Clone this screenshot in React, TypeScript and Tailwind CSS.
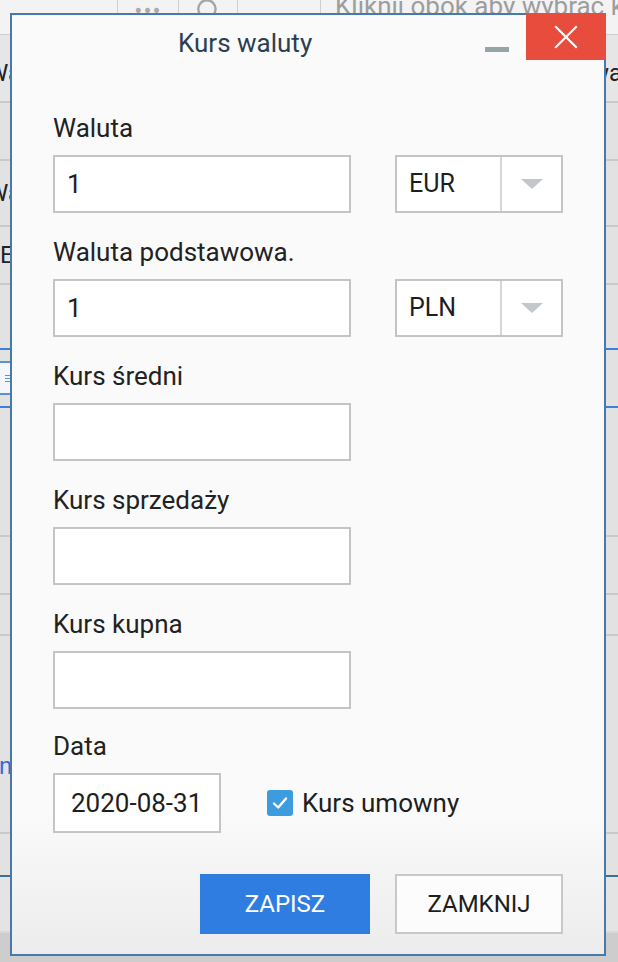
import { Search } from "lucide-react";

interface Field {
  label: string;
  value: string;
  currency?: string;
}

const fields: Field[] = [
  { label: "Waluta", value: "1", currency: "EUR" },
  { label: "Waluta podstawowa.", value: "1", currency: "PLN" },
  { label: "Kurs średni", value: "" },
  { label: "Kurs sprzedaży", value: "" },
  { label: "Kurs kupna", value: "" },
];

function CurrencySelect({ code }: { code: string }) {
  return (
    <div className="flex w-[168px] h-[58px] border-2 border-[#c4c4c4] bg-white">
      <div className="flex items-center w-[103px] pl-[12px] text-[25px] text-[#1e1e1e]">{code}</div>
      <div className="flex flex-1 items-center justify-center border-l-2 border-[#d6d6d6]">
        <div className="w-0 h-0 border-l-[11px] border-r-[11px] border-t-[10px] border-l-transparent border-r-transparent border-t-[#c3c7cb]" />
      </div>
    </div>
  );
}

function Background() {
  return (
    <div className="flex flex-col w-full h-full text-[24px] text-[#222]">
      {/* toolbar behind the dialog */}
      <div className="flex h-[35px] bg-[#f3f3f3] border-b border-[#cdcdcd] text-[#9d9d9d]">
        <div className="shrink-0 w-[118px] border-r border-[#cfcfcf]" />
        <div className="shrink-0 flex justify-center w-[61px] border-r border-[#cfcfcf] leading-[22px] tracking-[1px] text-[#aaa]">•••</div>
        <div className="shrink-0 flex justify-center w-[59px] border-r border-[#cfcfcf] -mt-[3px]">
          <Search size={26} strokeWidth={2.2} className="text-[#a6a6a6]" />
        </div>
        <div className="shrink-0 w-[83px] border-r border-[#cfcfcf]" />
        <div className="shrink-0 pl-[14px] -mt-[10px] text-[26px] leading-[32px] whitespace-nowrap">Kliknij obok aby wybrać kurs</div>
      </div>
      <div className="flex items-center justify-between h-[68px] border-b-2 border-[#c9c9c9] bg-[#e6e6e6] pt-[10px]">
        <span className="-ml-[13px]">Waluta</span>
        <span className="-mr-[4px]">Nazwa</span>
      </div>
      <div className="h-[58px] border-b-2 border-[#c9c9c9] bg-[#e2e2e2]" />
      <div className="flex items-center h-[66px] border-b-2 border-[#c9c9c9] bg-[#e2e2e2]">
        <span className="-ml-[13px]">Waluta</span>
      </div>
      <div className="flex items-center h-[58px] border-b-2 border-[#c9c9c9] bg-[#e2e2e2]">
        <span>EUR</span>
      </div>
      <div className="h-[65px] border-b-2 border-[#3f7fd8] bg-[#e2e2e2]" />
      <div className="flex items-center h-[58px] border-b-2 border-[#3f7fd8] bg-[#e2e2e2]">
        <div className="flex flex-col justify-center gap-[2px] w-[14px] h-[34px] -ml-[2px] pl-[5px] border-2 border-[#5b8fe0] bg-[#f3f6fb]">
          <div className="w-[6px] h-[1px] bg-[#5b8fe0]" />
          <div className="w-[6px] h-[1px] bg-[#5b8fe0]" />
          <div className="w-[6px] h-[1px] bg-[#5b8fe0]" />
        </div>
      </div>
      <div className="h-[129px] border-b-2 border-[#c9c9c9] bg-[#e2e2e2]" />
      <div className="h-[58px] border-b-2 border-[#c9c9c9] bg-[#e2e2e2]" />
      <div className="h-[41px] border-b-2 border-[#c9c9c9] bg-[#e2e2e2]" />
      <div className="flex items-end h-[198px] border-b-2 border-[#c9c9c9] bg-[#e2e2e2] pb-[48px]">
        <span className="-ml-[1px] text-[#2f6fd6]">ne</span>
      </div>
      <div className="h-[43px] border-b-2 border-[#3d6f99] bg-[#e2e2e2]" />
      <div className="h-[56px] border-b-2 border-[#d9d9d9] bg-[#e4e4e4]" />
      <div className="flex-1 bg-[#cdcdcd]" />
    </div>
  );
}

export default function App() {
  return (
    <div className="relative w-[618px] h-[962px] overflow-hidden bg-[#e0e0e0] font-[Roboto,'Noto_Sans',sans-serif]">
      <Background />

      {/* dialog */}
      <div className="absolute left-[10px] top-[13px] w-[596px] h-[943px] flex flex-col border-2 border-[#457aa9] bg-linear-to-b from-[#fafafa] from-85% to-[#ececec]">
        <div className="flex items-start h-[43px]">
          <div className="ml-[166px] pt-[14px] text-[26px] leading-[28px] text-[#2c3e50]">Kurs waluty</div>
          <div className="flex-1" />
          <div className="mt-[32px] mr-[17px] w-[24px] h-[5px] bg-[#95a5a6]" />
          <div className="flex items-center justify-center -mt-[2px] -mr-[2px] w-[80px] h-[47px] bg-[#e74c3c]">
            <svg width="24" height="24" viewBox="0 0 24 24" fill="none" stroke="white" strokeWidth="2.2" strokeLinecap="square">
              <path d="M2 2 L22 22 M22 2 L2 22" />
            </svg>
          </div>
        </div>

        <div className="flex flex-col px-[41px] pt-[55px]">
          {fields.map((f, i) => (
            <div key={i} className={i === 0 ? "" : "mt-[24px]"}>
              <div className="text-[26px] leading-[30px] text-[#222] mb-[12px]">{f.label}</div>
              <div className="flex items-center justify-between">
                <input
                  readOnly
                  value={f.value}
                  className="w-[298px] h-[58px] border-2 border-[#c4c4c4] bg-white pl-[12px] text-[26px] text-[#1e1e1e] outline-none"
                />
                {f.currency && <CurrencySelect code={f.currency} />}
              </div>
            </div>
          ))}

          <div className="mt-[22px]">
            <div className="text-[26px] leading-[30px] text-[#222] mb-[12px]">Data</div>
            <div className="flex items-center">
              <input
                readOnly
                value="2020-08-31"
                className="w-[168px] h-[60px] border-2 border-[#c4c4c4] bg-white pl-[16px] text-[26px] text-[#1e1e1e] outline-none"
              />
              <div className="flex items-center ml-[46px]">
                <div className="flex items-center justify-center w-[26px] h-[26px] rounded-[3px] bg-[#3d9be0]">
                  <svg width="18" height="18" viewBox="0 0 18 18" fill="none" stroke="white" strokeWidth="2.4" strokeLinecap="round" strokeLinejoin="round">
                    <path d="M3 9.5 L7.2 13.5 L15 4.5" />
                  </svg>
                </div>
                <span className="ml-[9px] text-[26px] text-[#1e1e1e]">Kurs umowny</span>
              </div>
            </div>
          </div>

          <div className="flex justify-end gap-[25px] mt-[41px]">
            <button className="w-[170px] h-[60px] bg-[#2f7de1] text-white text-[24px]">ZAPISZ</button>
            <button className="w-[168px] h-[60px] border-2 border-[#c5c9cc] bg-[#fcfcfc] text-[#1e1e1e] text-[24px]">ZAMKNIJ</button>
          </div>
        </div>
      </div>
    </div>
  );
}
